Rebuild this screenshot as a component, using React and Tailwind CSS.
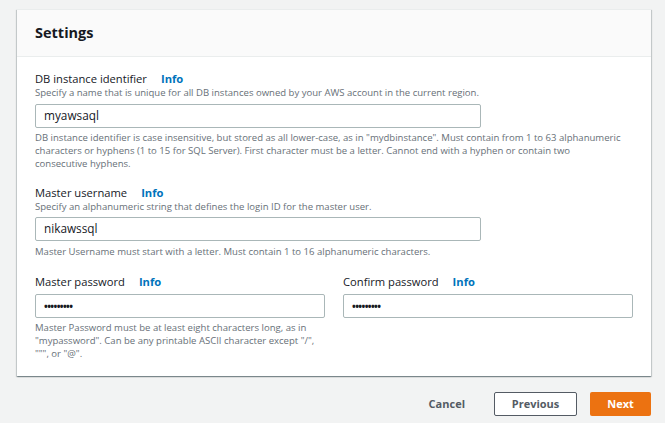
import React from "react";

const font = { fontFamily: '"Open Sans", "Noto Sans", sans-serif' };

function Label({ children }) {
  return (
    <div className="flex items-center h-[14px] text-[11.2px] leading-[14px] text-[#16191f]">
      <span>{children}</span>
      <span className="ml-[14px] font-bold text-[#0073bb]">Info</span>
    </div>
  );
}

function Desc({ children, className = "" }) {
  return (
    <div className={"text-[9.55px] leading-[13px] text-[#687078] " + className}>{children}</div>
  );
}

function Input({ value, className = "", dots }) {
  return (
    <div
      className={
        "h-[24px] border border-[#aab7b8] rounded-[2px] bg-white flex items-center pl-[8px] text-[11.8px] text-[#16191f] " +
        className
      }
    >
      {dots ? (
        <span className="text-[10px] tracking-[-0.6px] font-bold">•••••••••</span>
      ) : (
        value
      )}
    </div>
  );
}

export default function App() {
  return (
    <div className="w-[665px] h-[423px] bg-[#f2f3f3] pt-[9px] pl-[17px] overflow-hidden" style={font}>
      <div className="w-[634px] bg-white shadow-[0_1px_1px_0_rgba(0,28,36,0.3),1px_1px_1px_0_rgba(0,28,36,0.15),-1px_1px_1px_0_rgba(0,28,36,0.15)] border-t border-[#eaeded]">
        <div className="h-[47px] bg-[#fafafa] border-b border-[#eaeded] flex items-center px-[18px]">
          <h2 className="text-[14.5px] font-bold text-[#16191f]">Settings</h2>
        </div>
        <div className="px-[18px] pt-[15px] pb-[16px]">
          <Label>DB instance identifier</Label>
          <Desc>
            Specify a name that is unique for all DB instances owned by your AWS account in the current region.
          </Desc>
          <Input value="myawsaql" className="w-[446px] mt-[5px]" />
          <Desc className="mt-[3px] max-w-[589px]">
            DB instance identifier is case insensitive, but stored as all lower-case, as in "mydbinstance". Must
            contain from 1 to 63 alphanumeric characters or hyphens (1 to 15 for SQL Server). First character must be
            a letter. Cannot end with a hyphen or contain two consecutive hyphens.
          </Desc>

          <div className="mt-[16px]">
            <Label>Master username</Label>
            <Desc>Specify an alphanumeric string that defines the login ID for the master user.</Desc>
            <Input value="nikawssql" className="w-[446px] mt-[4px]" />
            <Desc className="mt-[4px]">
              Master Username must start with a letter. Must contain 1 to 16 alphanumeric characters.
            </Desc>
          </div>

          <div className="mt-[17px] grid grid-cols-2 gap-x-[18px]">
            <div>
              <Label>Master password</Label>
              <Input dots className="mt-[5px]" />
              <Desc className="mt-[3px] leading-[12.5px]">
                Master Password must be at least eight characters long, as in "mypassword". Can be any printable ASCII
                character except "/", """, or "@".
              </Desc>
            </div>
            <div>
              <Label>Confirm password</Label>
              <Input dots className="mt-[5px]" />
            </div>
          </div>
        </div>
      </div>
      <div className="w-[634px] flex justify-end items-center mt-[16px]">
        <button className="text-[11px] font-bold text-[#545b64] px-[8px] mr-[21px]">Cancel</button>
        <button className="h-[24px] w-[83px] border border-[#545b64] rounded-[2px] bg-white text-[11px] font-bold text-[#545b64]">
          Previous
        </button>
        <button className="h-[24px] w-[61px] ml-[13px] rounded-[2px] bg-[#ec7211] text-[11px] font-bold text-white">
          Next
        </button>
      </div>
    </div>
  );
}
